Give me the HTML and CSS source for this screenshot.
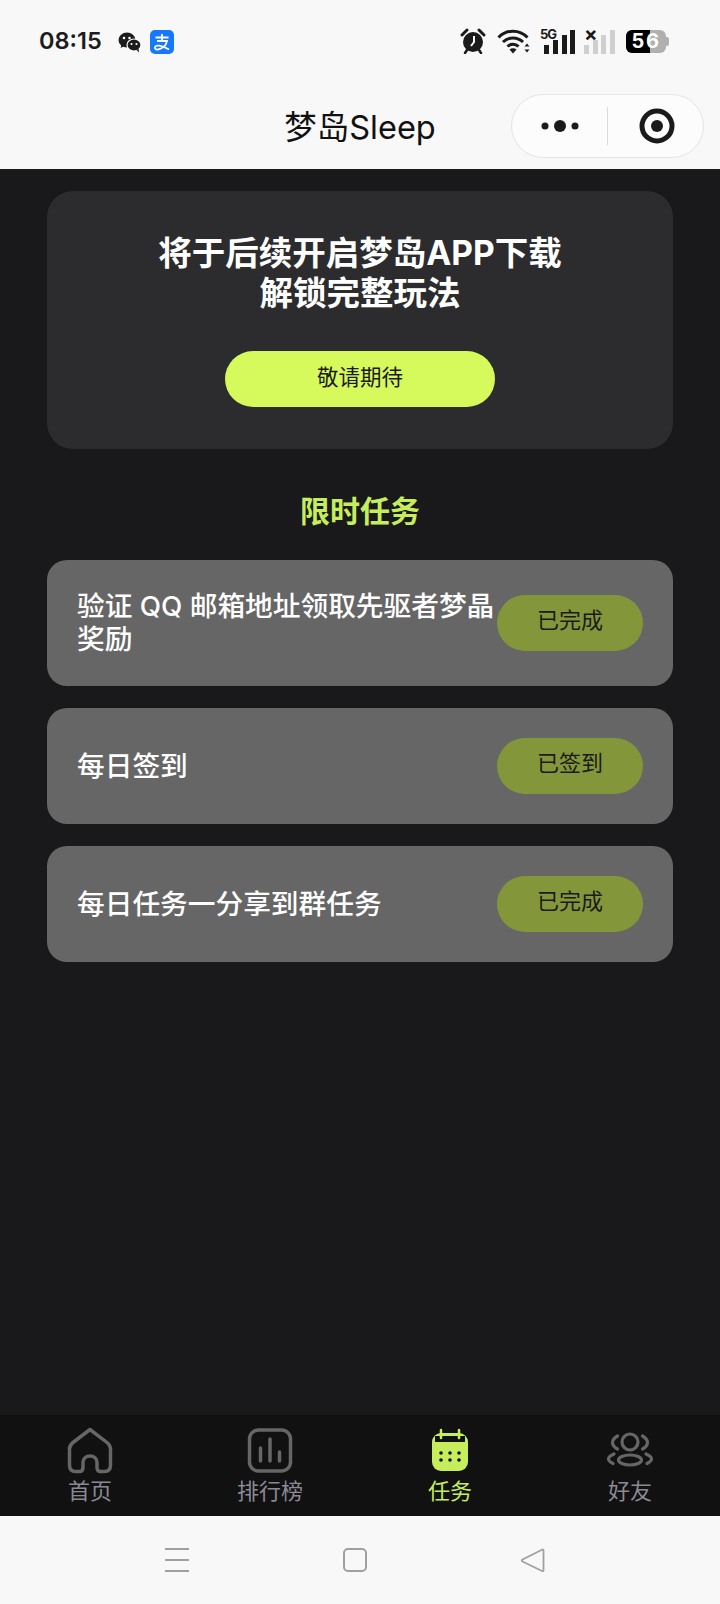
FILE: index.html
```html
<!DOCTYPE html>
<html lang="zh-CN">
<head>
  <meta charset="UTF-8">
  <meta name="viewport" content="width=device-width, initial-scale=1.0">
  <title>梦岛Sleep</title>
  <link rel="stylesheet" href="styles.css">
</head>
<body>

  <div class="status-bar">
    <div class="status-left">
      <span class="time">08:15</span>
      <svg class="ic-wechat" width="24" height="21" viewBox="0 0 24 21">
        <ellipse cx="9" cy="8" rx="8.5" ry="7.5" fill="#1c1c1c"/>
        <path d="M3.5 12l-.8 4 4.5-2.500z" fill="#1c1c1c"/>
        <ellipse cx="16" cy="13" rx="7" ry="6" fill="#1c1c1c" stroke="#f8f8f8" stroke-width="1.200"/>
        <path d="M18.500 18l2.500 2.500-.5-4z" fill="#1c1c1c"/>
        <circle cx="6" cy="6" r="1.300" fill="#f8f8f8"/>
        <circle cx="11.500" cy="6" r="1.300" fill="#f8f8f8"/>
        <circle cx="13.500" cy="12" r="1.100" fill="#f8f8f8"/>
        <circle cx="18.500" cy="12" r="1.100" fill="#f8f8f8"/>
      </svg>
      <svg class="ic-alipay" width="24" height="24" viewBox="0 0 24 24">
        <rect width="24" height="24" rx="5" fill="#1677ff"/>
        <path d="M5.500 7.500h13M12 4v6.500M7 11h10c-1 5-5 8-9 8.500-2.500.3-3.500-1-3-2.500.8-2.300 6-2 14 2.500" fill="none" stroke="#fff" stroke-width="1.800"/>
      </svg>
    </div>
    <div class="status-right">
      <svg width="26" height="26" viewBox="0 0 26 26">
        <circle cx="13" cy="14" r="10" fill="#1a1a1a"/>
        <path d="M2 7l5-5M24 7l-5-5" stroke="#1a1a1a" stroke-width="3" stroke-linecap="round"/>
        <path d="M7 22l-2 3M19 22l2 3" stroke="#1a1a1a" stroke-width="2.500" stroke-linecap="round"/>
        <path d="M14 8v6l-3 4" fill="none" stroke="#f8f8f8" stroke-width="2"/>
      </svg>
      <svg class="ic-wifi" width="34" height="25" viewBox="0 0 34 25">
        <path d="M1.500 8.500c8-8.500 21-8.500 29 0M6 13c5.500-5.500 14.500-5.500 20 0M10.500 17.500c3-3 8-3 11 0" fill="none" stroke="#1a1a1a" stroke-width="3"/>
        <path d="M12.500 20.500c2-1.600 5-1.600 7 0L16 24.500z" fill="#1a1a1a"/>
        <path d="M27.500 17.500l2.500-3 2.500 3zM27.500 20.500h5l-2.500 3z" fill="#1a1a1a"/>
      </svg>
      <div class="signal">
        <span class="net-label">5G</span>
        <i class="bar b1"></i><i class="bar b2"></i><i class="bar b3"></i><i class="bar b4"></i>
      </div>
      <div class="signal off">
        <span class="net-label">×</span>
        <i class="bar b1"></i><i class="bar b2"></i><i class="bar b3"></i><i class="bar b4"></i>
      </div>
      <div class="battery">
        <div class="battery-fill"></div>
        <span class="battery-num">56</span>
      </div>
    </div>
  </div>

  <header class="nav-bar">
    <span class="nav-title">梦岛Sleep</span>
    <div class="capsule">
      <svg width="46" height="14" viewBox="0 0 46 14">
        <circle cx="8" cy="7" r="3.500" fill="#1a1a1a"/>
        <circle cx="23" cy="7" r="6" fill="#1a1a1a"/>
        <circle cx="38" cy="7" r="3.500" fill="#1a1a1a"/>
      </svg>
      <span class="capsule-line"></span>
      <svg width="36" height="36" viewBox="0 0 36 36">
        <circle cx="18" cy="18" r="15" fill="none" stroke="#1a1a1a" stroke-width="5"/>
        <circle cx="18" cy="18" r="6" fill="#1a1a1a"/>
      </svg>
    </div>
  </header>

  <main class="content">
    <section class="promo">
      <h2>将于后续开启梦岛APP下载<br>解锁完整玩法</h2>
      <button class="promo-btn">敬请期待</button>
    </section>

    <h3 class="section-title">限时任务</h3>

    <div class="task task-tall">
      <p>验证 QQ 邮箱地址领取先驱者梦晶奖励</p>
      <button class="task-btn">已完成</button>
    </div>
    <div class="task">
      <p>每日签到</p>
      <button class="task-btn">已签到</button>
    </div>
    <div class="task">
      <p>每日任务一分享到群任务</p>
      <button class="task-btn">已完成</button>
    </div>
  </main>

  <nav class="tab-bar">
    <div class="tab">
      <svg width="46" height="47" viewBox="0 0 46 47">
        <path d="M23 2.500L6 15.500C3.500 17.500 2.500 19 2.500 22v16c0 4.500 2.500 6.500 6 6.500h4c3 0 3.500-2 3.500-4v-5c0-4 3-6.500 7-6.500s7 2.500 7 6.500v5c0 2 .5 4 3.500 4h4c3.500 0 6-2 6-6.500V22c0-3-1-4.500-3.500-6.500z" fill="none" stroke="#666" stroke-width="3.500" stroke-linejoin="round"/>
      </svg>
      <span>首页</span>
    </div>
    <div class="tab">
      <svg width="46" height="47" viewBox="0 0 46 47">
        <rect x="2.500" y="3" width="41" height="41" rx="9" fill="none" stroke="#666" stroke-width="3.500"/>
        <path d="M13.500 21v13M23 12v22M32.500 25v9" stroke="#666" stroke-width="3.500" stroke-linecap="round"/>
      </svg>
      <span>排行榜</span>
    </div>
    <div class="tab active">
      <svg width="46" height="47" viewBox="0 0 46 47">
        <rect x="5" y="6" width="36" height="38" rx="9" fill="#c6ee5c"/>
        <rect x="8" y="9" width="30" height="6" fill="#111112"/>
        <path d="M14 3v8M32 3v8" stroke="#c6ee5c" stroke-width="2.500" stroke-linecap="round"/>
        <g fill="#111112">
          <circle cx="14" cy="26" r="1.800"/><circle cx="23" cy="26" r="1.800"/><circle cx="32" cy="26" r="1.800"/>
          <circle cx="14" cy="33" r="1.800"/><circle cx="23" cy="33" r="1.800"/><circle cx="32" cy="33" r="1.800"/>
        </g>
      </svg>
      <span>任务</span>
    </div>
    <div class="tab">
      <svg width="48" height="47" viewBox="0 0 48 47">
        <g fill="none" stroke="#666" stroke-width="3.200" stroke-linecap="round">
          <circle cx="24" cy="15" r="8"/>
          <ellipse cx="24" cy="33" rx="11.500" ry="5"/>
          <path d="M11.500 9C8 11 6.500 13.500 6.500 15.500s1.500 4.500 5 6.500M36.500 9c3.500 2 5 4.500 5 6.500s-1.500 4.500-5 6.500M8 27c-3.500 1.500-5.500 3.500-5.500 5s1.500 3 4.500 4.500M40 27c3.500 1.500 5.500 3.500 5.500 5s-1.500 3-4.500 4.500"/>
        </g>
      </svg>
      <span>好友</span>
    </div>
  </nav>

  <div class="sys-nav">
    <div class="sys-menu"><i></i><i></i><i></i></div>
    <div class="sys-home"></div>
    <svg width="25" height="25" viewBox="0 0 25 25">
      <path d="M23.500 2.500c0-1-.7-1.200-1.500-.8L2.500 11.500c-1 .5-1 1.500 0 2L22 23c.8.4 1.500.200 1.500-.8z" fill="none" stroke="#a0a0a0" stroke-width="1.800" stroke-linejoin="round"/>
    </svg>
  </div>

</body>
</html>
```

FILE: styles.css
```css
* { box-sizing: border-box; }
body {
  margin: 0;
  width: 720px;
  height: 1604px;
  display: flex;
  flex-direction: column;
  overflow: hidden;
  background: #19191b;
  font-family: Inter, "Noto Sans CJK SC", sans-serif;
}
p, h2, h3 { margin: 0; }
button { border: 0; padding: 0 0 7px; font-family: inherit; color: #1a1a1a; }

/* status bar */
.status-bar {
  height: 82px;
  background: #f8f8f8;
  display: flex;
  justify-content: space-between;
  padding: 28px 51px 0 39px;
}
.status-left { display: flex; align-items: flex-start; height: 26px; }
.time { font-size: 23.500px; font-weight: 600; line-height: 26px; color: #1c1c1c; width: 79px; }
.ic-wechat { margin-top: 4px; margin-right: 8px; }
.ic-alipay { margin-top: 2px; }
.status-right { display: flex; align-items: flex-start; }
.ic-wifi { margin: 1px 0 0 11px; }
.signal { position: relative; width: 35px; height: 26px; margin-left: 9px; }
.signal.off { margin-left: 9px; width: 32px; }
.net-label { position: absolute; left: 0; top: 0; font-size: 13px; line-height: 13px; font-weight: 700; letter-spacing: -1px; color: #1a1a1a; }
.signal.off .net-label { font-size: 20px; }
.bar { position: absolute; bottom: 0; width: 5px; background: #1a1a1a; }
.signal .b1 { left: 4px; height: 9px; }
.signal .b2 { left: 13px; height: 14px; }
.signal .b3 { left: 22px; height: 19px; }
.signal .b4 { left: 30px; height: 24px; }
.signal.off .bar { background: #cfcfcf; }
.signal.off .b1 { left: 0; }
.signal.off .b2 { left: 9px; }
.signal.off .b3 { left: 17px; }
.signal.off .b4 { left: 26px; }
.battery {
  position: relative;
  width: 40px;
  height: 23px;
  margin: 2px 3px 0 10px;
  border-radius: 6px;
  background: #b0b0b0;
}
.battery::after {
  content: "";
  position: absolute;
  right: -3px;
  top: 7px;
  width: 3px;
  height: 9px;
  border-radius: 0 2px 2px 0;
  background: #b0b0b0;
}
.battery-fill { width: 24px; height: 23px; border-radius: 6px 0 0 6px; background: #000; }
.battery-num {
  position: absolute;
  left: 0;
  right: 0;
  top: 0;
  text-align: center;
  font-size: 20px;
  line-height: 23px;
  font-weight: 700;
  letter-spacing: 1.500px;
  color: #fff;
}

/* nav bar */
.nav-bar {
  position: relative;
  height: 87px;
  background: #f8f8f8;
  display: flex;
  justify-content: center;
}
.nav-title { font-size: 32.500px; line-height: 92px; color: #111; }
.capsule {
  position: absolute;
  left: 511px;
  top: 12px;
  width: 193px;
  height: 64px;
  border: 1px solid #e4e4e4;
  border-radius: 32px;
  background: #fcfcfc;
  display: flex;
  align-items: center;
  padding-left: 25px;
}
.capsule-line { width: 1px; height: 38px; margin: 0 31px 0 24px; background: #dcdcdc; }

/* content */
.content { flex: 1; padding: 22px 47px 0; }
.promo {
  height: 258px;
  padding-top: 42px;
  border-radius: 26px;
  background: #2c2c2e;
  text-align: center;
}
.promo h2 { font-size: 33.500px; line-height: 40px; font-weight: 700; color: #fff; }
.promo-btn {
  display: block;
  width: 270px;
  height: 56px;
  margin: 38px auto 0;
  border-radius: 28px;
  background: #d6f95c;
  font-size: 21.500px;
}
.section-title {
  margin: 42px 0 29px;
  text-align: center;
  font-size: 30px;
  line-height: 40px;
  font-weight: 700;
  color: #c6ee5c;
}
.task {
  height: 116px;
  margin-bottom: 22px;
  padding: 0 30px;
  border-radius: 20px;
  background: #666;
  display: flex;
  align-items: center;
  justify-content: space-between;
}
.task-tall { height: 126px; }
.task p { flex: 1; font-size: 27.700px; line-height: 33px; font-weight: 500; color: #fff; }
.task-btn {
  flex: none;
  width: 146px;
  height: 56px;
  padding-bottom: 11px;
  border-radius: 28px;
  background: #84963a;
  font-size: 22px;
}

/* bottom tabs */
.tab-bar {
  height: 101px;
  background: #111112;
  display: flex;
  padding-top: 12px;
}
.tab {
  flex: 1;
  display: flex;
  flex-direction: column;
  align-items: center;
  font-size: 22px;
  line-height: 28px;
  color: #8a8a94;
}
.tab svg { display: block; margin-bottom: 3px; }
.tab.active { color: #c6ee5c; }

/* system nav */
.sys-nav {
  height: 88px;
  background: #f8f8f8;
  display: flex;
  align-items: center;
  padding: 0 0 0 165px;
}
.sys-menu { width: 24px; height: 24px; display: flex; flex-direction: column; justify-content: space-between; margin-right: 154px; }
.sys-menu i { display: block; height: 2px; background: #a0a0a0; }
.sys-home { width: 24px; height: 24px; border: 2px solid #a0a0a0; border-radius: 5px; margin-right: 153px; }
```
